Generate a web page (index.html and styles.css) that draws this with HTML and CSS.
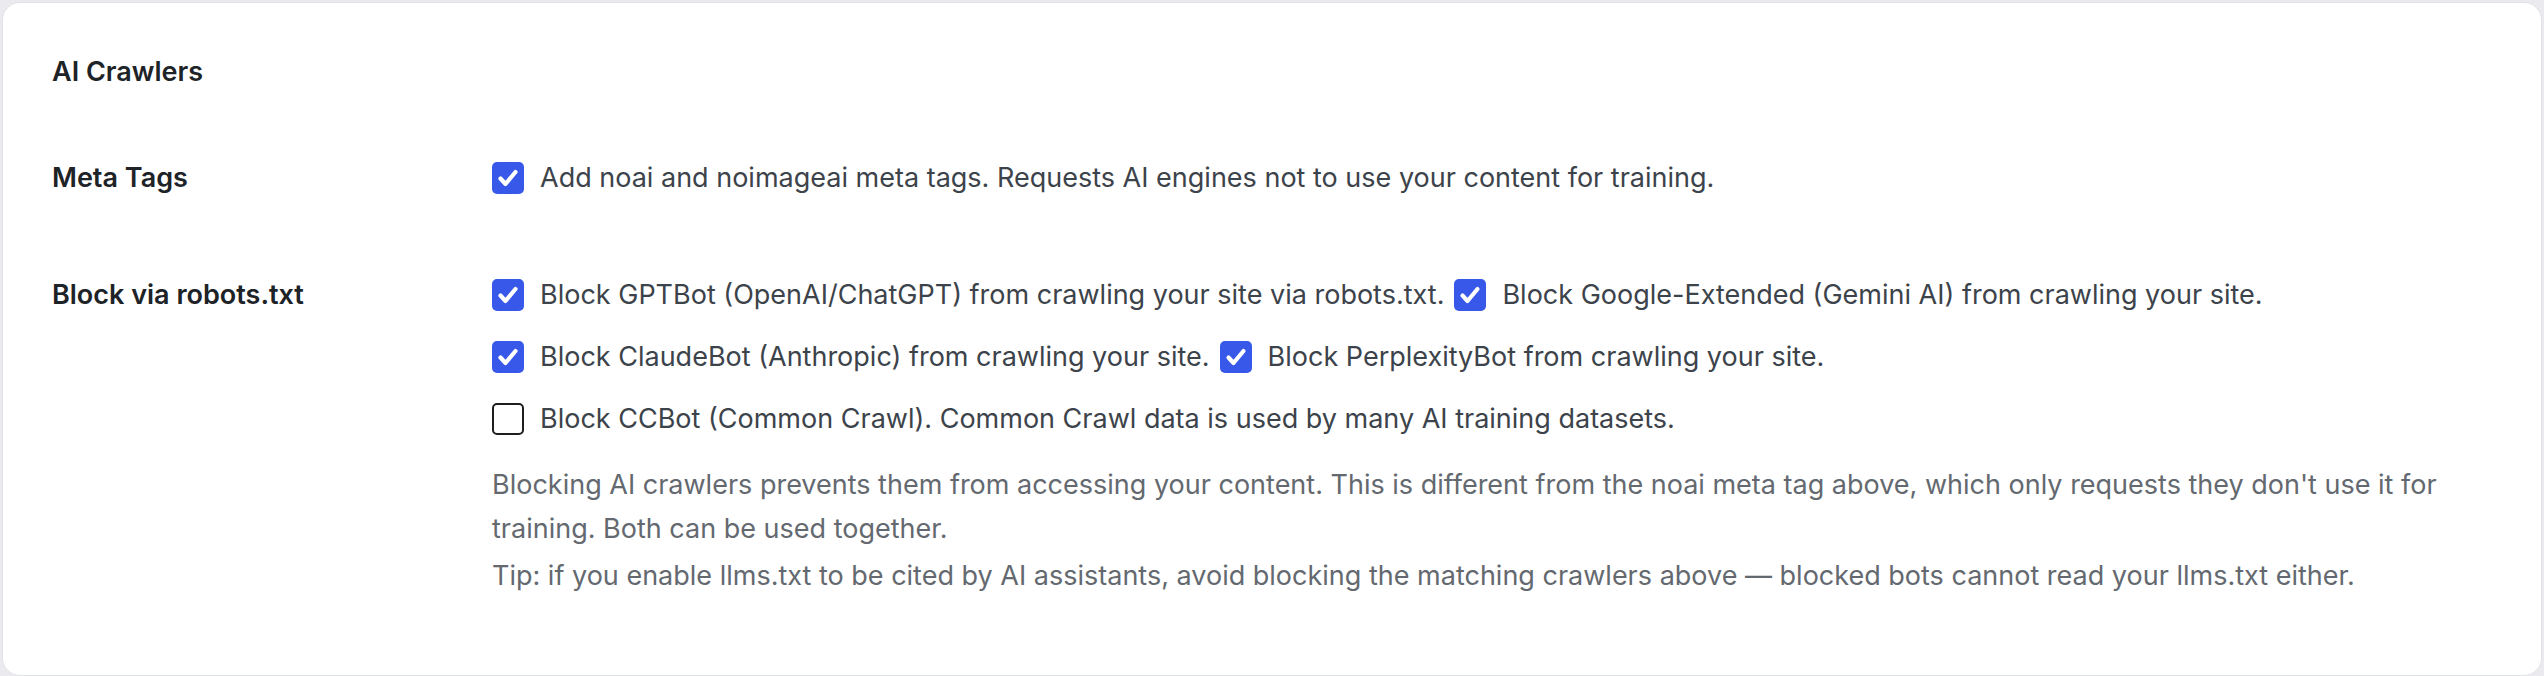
FILE: index.html
```html
<!DOCTYPE html>
<html lang="en">
<head>
    <meta charset="UTF-8">
    <meta name="viewport" content="width=device-width, initial-scale=1.0">
    <title>AI Crawlers</title>
    <link rel="stylesheet" href="styles.css">
</head>
<body>
    <section class="card">
        <h2 class="card-title">AI Crawlers</h2>

        <div class="field meta-field">
            <div class="field-label">Meta Tags</div>
            <div class="field-body">
                <label class="check">
                    <span class="box on"><svg viewBox="0 0 32 32"><path d="M8.5 16.5l5 5.5 10-12"/></svg></span>
                    <span>Add noai and noimageai meta tags. Requests AI engines not to use your content for training.</span>
                </label>
            </div>
        </div>

        <div class="field">
            <div class="field-label">Block via robots.txt</div>
            <div class="field-body">
                <div class="check-list">
                    <label class="check">
                        <span class="box on"><svg viewBox="0 0 32 32"><path d="M8.5 16.5l5 5.5 10-12"/></svg></span>
                        <span>Block GPTBot (OpenAI/ChatGPT) from crawling your site via robots.txt.</span>
                    </label>
                    <label class="check">
                        <span class="box on"><svg viewBox="0 0 32 32"><path d="M8.5 16.5l5 5.5 10-12"/></svg></span>
                        <span>Block Google-Extended (Gemini AI) from crawling your site.</span>
                    </label>
                    <label class="check">
                        <span class="box on"><svg viewBox="0 0 32 32"><path d="M8.5 16.5l5 5.5 10-12"/></svg></span>
                        <span>Block ClaudeBot (Anthropic) from crawling your site.</span>
                    </label>
                    <label class="check">
                        <span class="box on"><svg viewBox="0 0 32 32"><path d="M8.5 16.5l5 5.5 10-12"/></svg></span>
                        <span>Block PerplexityBot from crawling your site.</span>
                    </label>
                    <label class="check">
                        <span class="box"></span>
                        <span>Block CCBot (Common Crawl). Common Crawl data is used by many AI training datasets.</span>
                    </label>
                </div>
                <p class="description">Blocking AI crawlers prevents them from accessing your content. This is different from the noai meta tag above, which only requests they don't use it for training. Both can be used together.</p>
                <p class="description tip">Tip: if you enable llms.txt to be cited by AI assistants, avoid blocking the matching crawlers above — blocked bots cannot read your llms.txt either.</p>
            </div>
        </div>
    </section>
</body>
</html>
```

FILE: styles.css
```css
:root {
    --page-bg: #ebebef;
    --card-border: #e2e3e7;
    --heading-color: #1d2327;
    --text-color: #3c434a;
    --muted-color: #646970;
    --accent-color: #3858e9;
}

* {
    margin: 0;
    padding: 0;
    box-sizing: border-box;
}

body {
    background-color: var(--page-bg);
    font-family: Inter, 'Noto Sans', sans-serif;
    color: var(--text-color);
    padding: 2px;
}

.card {
    background: #ffffff;
    border: 1px solid var(--card-border);
    border-radius: 18px;
    padding: 53px 50px 77px 49px;
}

.card-title {
    font-size: 27px;
    line-height: 32px;
    font-weight: 600;
    color: var(--heading-color);
}

.field {
    display: grid;
    grid-template-columns: 440px 1fr;
}

.meta-field {
    margin-top: 74px;
    margin-bottom: 81px;
}

.field-label {
    font-size: 27px;
    line-height: 32px;
    font-weight: 600;
    color: var(--heading-color);
}

.check-list {
    display: flex;
    flex-wrap: wrap;
    column-gap: 10px;
    row-gap: 30px;
}

.check {
    display: inline-flex;
    align-items: center;
    gap: 16px;
    font-size: 27px;
    line-height: 32px;
    color: var(--text-color);
}

.box {
    flex: none;
    width: 32px;
    height: 32px;
    border: 2.5px solid #1e1e1e;
    border-radius: 5px;
    background: #ffffff;
}

.box.on {
    border: none;
    background: var(--accent-color);
}

.box svg {
    display: block;
    width: 32px;
    height: 32px;
}

.box svg path {
    fill: none;
    stroke: #ffffff;
    stroke-width: 4.2;
    stroke-linecap: round;
    stroke-linejoin: round;
}

.description {
    margin-top: 28px;
    font-size: 27px;
    line-height: 44px;
    color: var(--muted-color);
}

.description.tip {
    margin-top: 3px;
}
```
